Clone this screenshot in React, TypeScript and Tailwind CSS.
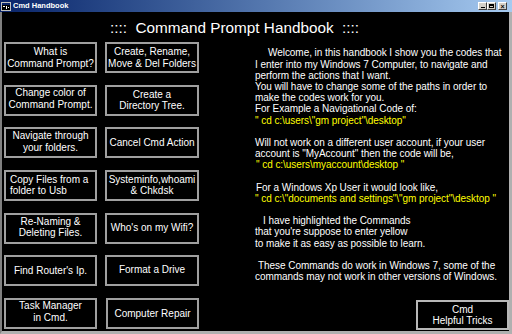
import React from "react";

const F = { fontFamily: '"Liberation Sans", Arial, sans-serif' };

type Btn = { lines: string[]; cls?: string };

const buttons: Btn[] = [
  { lines: ["What is", "Command Prompt?"] },
  { lines: ["Create, Rename,", "Move & Del Folders"] },
  { lines: ["Change color of", "Command Prompt."], cls: "pb-[3px]" },
  { lines: ["Create a", "Directory Tree."] },
  { lines: ["Navigate through", "your folders."], cls: "pb-[2px]" },
  { lines: ["Cancel Cmd Action"] },
  { lines: ["Copy Files from a", "folder to Usb"], cls: "items-start pl-[4px]" },
  { lines: ["Systeminfo,whoami", "& Chkdsk"] },
  { lines: ["Re-Naming &", "Deleting Files."], cls: "pb-[2px]" },
  { lines: ["Who's on my Wifi?"] },
  { lines: ["Find Router's Ip."] },
  { lines: ["Format a Drive"], cls: "pb-[3px]" },
  { lines: ["Task Manager", "in Cmd."], cls: "pb-[3px]" },
  { lines: ["Computer Repair"], cls: "ml-[1px]" },
];

function Line({
  children,
  pl = "pl-[0px]",
  y = false,
}: {
  children: React.ReactNode;
  pl?: string;
  y?: boolean;
}) {
  return (
    <div className={`${pl} h-[11.2px] whitespace-pre ${y ? "text-[#ffff00]" : "text-white"}`}>
      {children}
    </div>
  );
}

export default function App() {
  return (
    <div className="w-[512px] h-[334px] bg-black flex flex-col overflow-hidden" style={F}>
      {/* title bar */}
      <div className="h-[12px] flex items-center bg-gradient-to-r from-[#0a246a] to-[#a6caf0] shrink-0">
        <svg width="10" height="9" viewBox="0 0 10 9" className="ml-[1px]">
          <rect x="0" y="0" width="10" height="9" fill="#c0c0c0" />
          <rect x="1" y="1" width="8" height="2" fill="#0a246a" />
          <rect x="1" y="3" width="8" height="5" fill="#000" />
          <rect x="2" y="4" width="2" height="1" fill="#fff" />
          <rect x="5" y="4" width="1" height="3" fill="#fff" />
          <rect x="7" y="5" width="1" height="1" fill="#fff" />
        </svg>
        <span className="ml-[2px] text-[7.5px] font-bold text-white leading-none tracking-[0px]">
          Cmd Handbook
        </span>
        <div className="ml-auto mr-[5px] flex items-center">
          <div className="w-[9px] h-[8px] bg-[#d4d0c8] border-t border-l border-white border-r border-b border-r-[#404040] border-b-[#404040] flex items-end justify-center pb-[1px]">
            <div className="w-[4px] h-[1px] bg-black" />
          </div>
          <div className="w-[9px] h-[8px] bg-[#d4d0c8] border-t border-l border-white border-r border-b border-r-[#404040] border-b-[#404040] flex items-center justify-center">
            <div className="w-[5px] h-[4px] border border-black border-t-2" />
          </div>
          <div className="ml-[2px] w-[9px] h-[8px] bg-[#d4d0c8] border-t border-l border-white border-r border-b border-r-[#404040] border-b-[#404040] flex items-center justify-center text-[7px] font-bold leading-none text-black">
            ×
          </div>
        </div>
      </div>

      {/* body */}
      <div className="flex-1 flex flex-col border-l-[2px] border-r-[3px] border-b-[3px] border-l-[#808080] border-r-[#b0b0b0] border-b-[#b0b0b0]">
        <div className="h-[30px] shrink-0 pl-[108px] pt-[1px] text-white text-[15.3px] leading-[30px] whitespace-pre">
          {"::::  Command Prompt Handbook  ::::"}
        </div>
        <div className="flex-1 flex">
          <div className="pl-[2px] grid grid-cols-[93px_94px] gap-x-[8px] gap-y-[11.67px] auto-rows-[31px] content-start">
            {buttons.map((b, i) => (
              <div
                key={i}
                className={`border-2 border-[#a0a0a0] flex flex-col items-center justify-center text-white text-[10px] leading-[11.5px] whitespace-nowrap ${b.cls ?? ""}`}
              >
                {b.lines.map((l, j) => (
                  <div key={j}>{l}</div>
                ))}
              </div>
            ))}
          </div>
          <div className="flex-1 flex flex-col pl-[56px] pt-[5.4px] text-[10px] leading-[11.2px] tracking-[-0.05px]">
            <Line pl="pl-[13px]">Welcome, in this handbook I show you the codes that</Line>
            <Line>I enter into my Windows 7 Computer, to navigate and</Line>
            <Line>perform the actions that I want.</Line>
            <Line>You will have to change some of the paths in order to</Line>
            <Line>make the codes work for you.</Line>
            <Line>For Example a Navigational Code of:</Line>
            <Line y>{'" cd c:\\users\\"gm project"\\desktop"'}</Line>
            <Line> </Line>
            <Line>Will not work on a different user account, if your user</Line>
            <Line>account is "MyAccount" then the code will be,</Line>
            <Line pl="pl-[1px]" y>{'" cd c:\\users\\myaccount\\desktop "'}</Line>
            <Line> </Line>
            <Line pl="pl-[1px]">For a Windows Xp User it would look like,</Line>
            <Line y>{'" cd c:\\"documents and settings"\\"gm project"\\desktop "'}</Line>
            <Line> </Line>
            <Line pl="pl-[8px]">I have highlighted the Commands</Line>
            <Line pl="pl-[0px]">that you're suppose to enter yellow</Line>
            <Line pl="pl-[0px]">to make it as easy as possible to learn.</Line>
            <Line> </Line>
            <Line pl="pl-[3px]">These Commands do work in Windows 7, some of the</Line>
            <Line>commands may not work in other versions of Windows.</Line>
            <div className="mt-auto mb-[1px] self-end w-[93px] h-[30px] border-2 border-[#b8b8b8] flex flex-col items-center justify-center text-white text-[10px] leading-[11.5px] tracking-[0px]">
              <div>Cmd</div>
              <div>Helpful Tricks</div>
            </div>
          </div>
        </div>
      </div>
    </div>
  );
}
